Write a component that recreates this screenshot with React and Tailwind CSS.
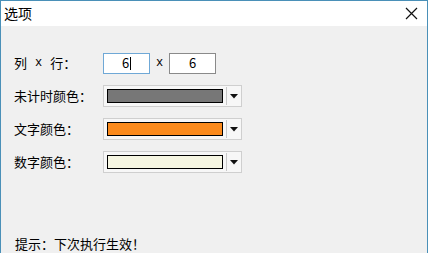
import React from 'react';

const font = { fontFamily: '"Noto Sans CJK SC", "Liberation Sans", sans-serif' };

function ColorCombo({ color }) {
  return (
    <div className="flex h-[22px] w-[139px] items-center border border-[#cfcfcf] bg-[#f7f7f7] pl-[3px]">
      <div className="h-[14px] w-[116px] border border-black" style={{ background: color }} />
      <div className="ml-[3px] h-[18px] w-px bg-[#c8c8c8]" />
      <div className="flex flex-1 items-center justify-center">
        <svg width="8" height="5" viewBox="0 0 8 5">
          <path d="M0 0 L8 0 L4 4.5 Z" fill="#111" />
        </svg>
      </div>
    </div>
  );
}

function Row({ label, children }) {
  return (
    <div className="flex h-[22px] items-center">
      <span className="flex w-[89px] items-center text-[13px] text-black">{label}</span>
      {children}
    </div>
  );
}

export default function App() {
  return (
    <div
      className="flex h-[253px] w-[428px] flex-col border-x border-t border-x-[#4a90b8] border-t-[#4a90b8] bg-[#f0f0f0]"
      style={font}
    >
      <div className="flex h-[25px] items-center justify-between bg-white pl-[3px] pr-[9px]">
        <span className="text-[14px] text-black">选项</span>
        <svg width="13" height="13" viewBox="0 0 13 13">
          <path d="M1 1 L12 12 M12 1 L1 12" stroke="#111" strokeWidth="1.2" />
        </svg>
      </div>
      <div className="flex flex-1 flex-col pl-[13px] pt-[26px]">
        <Row
          label={
            <>
              列<span className="mx-[8px] font-['Liberation_Mono'] text-[12px]">x</span>行：
            </>
          }
        >
          <div className="flex items-center">
            <div className="flex h-[21px] w-[47px] items-center justify-center border border-[#6fa8d6] bg-white text-[13px]">
              6<span className="ml-px inline-block h-[13px] w-px bg-black" />
            </div>
            <span className="mx-[6px] font-['Liberation_Mono'] text-[12px]">x</span>
            <div className="flex h-[21px] w-[47px] items-center justify-center border border-[#8a8a8a] bg-white text-[13px]">
              6
            </div>
          </div>
        </Row>
        <div className="mt-[11px] flex flex-col gap-[11px]">
          <Row label="未计时颜色：">
            <ColorCombo color="#777777" />
          </Row>
          <Row label="文字颜色：">
            <ColorCombo color="#fb8a1c" />
          </Row>
          <Row label="数字颜色：">
            <ColorCombo color="#f6f6e2" />
          </Row>
        </div>
        <div className="mt-auto pl-px text-[13px] leading-[18px] text-black">提示：下次执行生效！</div>
      </div>
    </div>
  );
}
